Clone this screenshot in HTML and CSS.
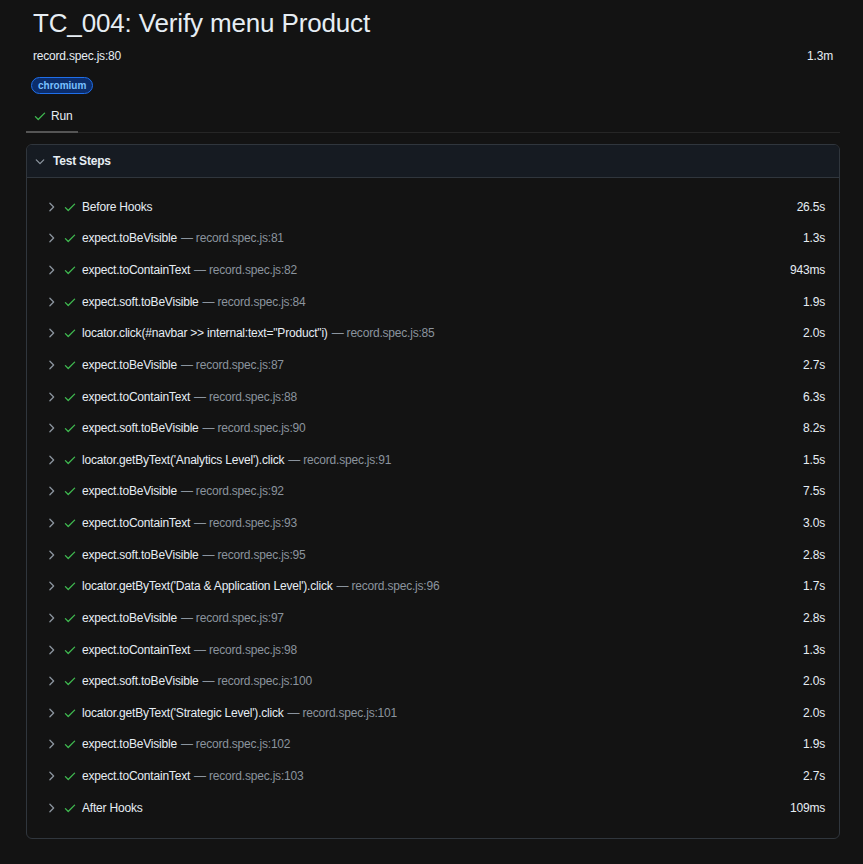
FILE: index.html
```html
<!DOCTYPE html>
<html>
<head>
<meta charset="utf-8">
<link rel="stylesheet" href="styles.css">
</head>
<body>
<div class="page">
  <h1 class="title">TC_004: Verify menu Product</h1>
  <div class="meta">
    <span>record.spec.js:80</span>
    <span>1.3m</span>
  </div>
  <div class="badges"><span class="badge">chromium</span></div>
  <div class="tabs">
    <div class="tab">
      <svg class="ok" viewBox="0 0 16 16" width="16" height="16"><path d="M13.78 4.22a.75.75 0 0 1 0 1.06l-7.25 7.25a.75.75 0 0 1-1.06 0L2.220 9.28a.75.75 0 0 1 1.06-1.06L6 10.94l6.72-6.72a.75.75 0 0 1 1.06 0Z"/></svg>
      <span>Run</span>
    </div>
  </div>
  <div class="box">
    <div class="box-head">
      <svg class="chev" viewBox="0 0 16 16" width="16" height="16"><path d="M12.78 6.22a.75.75 0 0 1 0 1.06l-4.25 4.25a.75.75 0 0 1-1.060 0L3.22 7.28a.75.75 0 0 1 1.06-1.06L8 9.94l3.72-3.72a.75.75 0 0 1 1.06 0Z"/></svg>
      <span>Test Steps</span>
    </div>
    <div class="steps" id="steps"></div>
  </div>
</div>
<script>
const steps = [
  ["Before Hooks", "", "26.5s"],
  ["expect.toBeVisible", "record.spec.js:81", "1.3s"],
  ["expect.toContainText", "record.spec.js:82", "943ms"],
  ["expect.soft.toBeVisible", "record.spec.js:84", "1.9s"],
  ["locator.click(#navbar >> internal:text=\"Product\"i)", "record.spec.js:85", "2.0s"],
  ["expect.toBeVisible", "record.spec.js:87", "2.7s"],
  ["expect.toContainText", "record.spec.js:88", "6.3s"],
  ["expect.soft.toBeVisible", "record.spec.js:90", "8.2s"],
  ["locator.getByText('Analytics Level').click", "record.spec.js:91", "1.5s"],
  ["expect.toBeVisible", "record.spec.js:92", "7.5s"],
  ["expect.toContainText", "record.spec.js:93", "3.0s"],
  ["expect.soft.toBeVisible", "record.spec.js:95", "2.8s"],
  ["locator.getByText('Data & Application Level').click", "record.spec.js:96", "1.7s"],
  ["expect.toBeVisible", "record.spec.js:97", "2.8s"],
  ["expect.toContainText", "record.spec.js:98", "1.3s"],
  ["expect.soft.toBeVisible", "record.spec.js:100", "2.0s"],
  ["locator.getByText('Strategic Level').click", "record.spec.js:101", "2.0s"],
  ["expect.toBeVisible", "record.spec.js:102", "1.9s"],
  ["expect.toContainText", "record.spec.js:103", "2.7s"],
  ["After Hooks", "", "109ms"]
];
const chev = '<svg class="rchev" viewBox="0 0 16 16" width="16" height="16"><path d="M6.22 3.22a.75.75 0 0 1 1.06 0l4.25 4.25a.75.75 0 0 1 0 1.06l-4.25 4.25a.75.75 0 0 1-1.06-1.06L9.94 8 6.220 4.28a.75.75 0 0 1 0-1.06Z"/></svg>';
const ok = '<svg class="ok" viewBox="0 0 16 16" width="16" height="16"><path d="M13.78 4.22a.75.75 0 0 1 0 1.06l-7.25 7.25a.75.75 0 0 1-1.06 0L2.22 9.28a.75.75 0 0 1 1.06-1.06L6 10.94l6.72-6.72a.75.75 0 0 1 1.06 0Z"/></svg>';
const root = document.getElementById('steps');
for (const [t, loc, d] of steps) {
  const row = document.createElement('div');
  row.className = 'step';
  const title = document.createElement('span');
  title.className = 'step-title';
  title.textContent = t;
  row.innerHTML = chev + ok;
  row.appendChild(title);
  if (loc) {
    const l = document.createElement('span');
    l.className = 'loc';
    l.textContent = '— ' + loc;
    row.appendChild(l);
  }
  const dur = document.createElement('span');
  dur.className = 'dur';
  dur.textContent = d;
  row.appendChild(dur);
  root.appendChild(row);
}
</script>
</body>
</html>
```
FILE: styles.css
```css
html, body {
  margin: 0;
  padding: 0;
  background: #131313;
}
body {
  font-family: "Liberation Sans", Arial, sans-serif;
  color: #c9d1d9;
  font-size: 12px;
  letter-spacing: -0.2px;
}
.page {
  padding: 0 23px 0 26px;
}
.title {
  margin: 0;
  padding: 6px 0 0 7px;
  font-weight: 400;
  font-size: 26px;
  line-height: 34px;
  letter-spacing: -0.15px;
  color: #e6edf3;
}
.meta {
  display: flex;
  justify-content: space-between;
  padding: 8px 7px 0 7px;
  line-height: 16px;
  color: #e6edf3;
}
.badges {
  padding: 13px 0 0 5px;
  line-height: 17px;
  height: 17px;
}
.badge {
  display: inline-block;
  vertical-align: top;
  border: 1px solid #1f6feb;
  background: #0c2d6b;
  color: #79c0ff;
  border-radius: 10px;
  font-size: 10px;
  font-weight: 700;
  letter-spacing: 0;
  line-height: 15px;
  padding: 0 6px;
}
.tabs {
  margin-top: 9px;
  border-bottom: 1px solid #262626;
  display: flex;
}
.tab {
  display: flex;
  align-items: center;
  gap: 4px;
  padding: 4px 6px 6px 7px;
  height: 18px;
  border-bottom: 2px solid #555;
  margin-bottom: -1px;
  color: #e6edf3;
}
.tab .ok { width: 14px; height: 14px; }
.ok { fill: #3fb950; }
.box {
  margin-top: 11px;
  border: 1px solid #30363d;
  border-radius: 6px;
  overflow: hidden;
}
.box-head {
  background: #161b22;
  border-bottom: 1px solid #30363d;
  height: 32px;
  display: flex;
  align-items: center;
  padding-left: 6px;
  gap: 6px;
  font-weight: 700;
  color: #e6edf3;
}
.chev { fill: #8b949e; width: 14px; height: 14px; }
.steps {
  padding: 13px 14px 14px 0;
}
.step {
  display: flex;
  align-items: center;
  height: 31.63px;
  padding-left: 17px;
  white-space: nowrap;
}
.rchev { fill: #8b949e; width: 14px; height: 14px; margin-right: 5px; }
.step .ok { width: 14px; height: 14px; margin-right: 5px; }
.step-title { color: #e6edf3; }
.loc { color: #8b949e; margin-left: 4px; }
.dur { margin-left: auto; color: #e6edf3; }
```
